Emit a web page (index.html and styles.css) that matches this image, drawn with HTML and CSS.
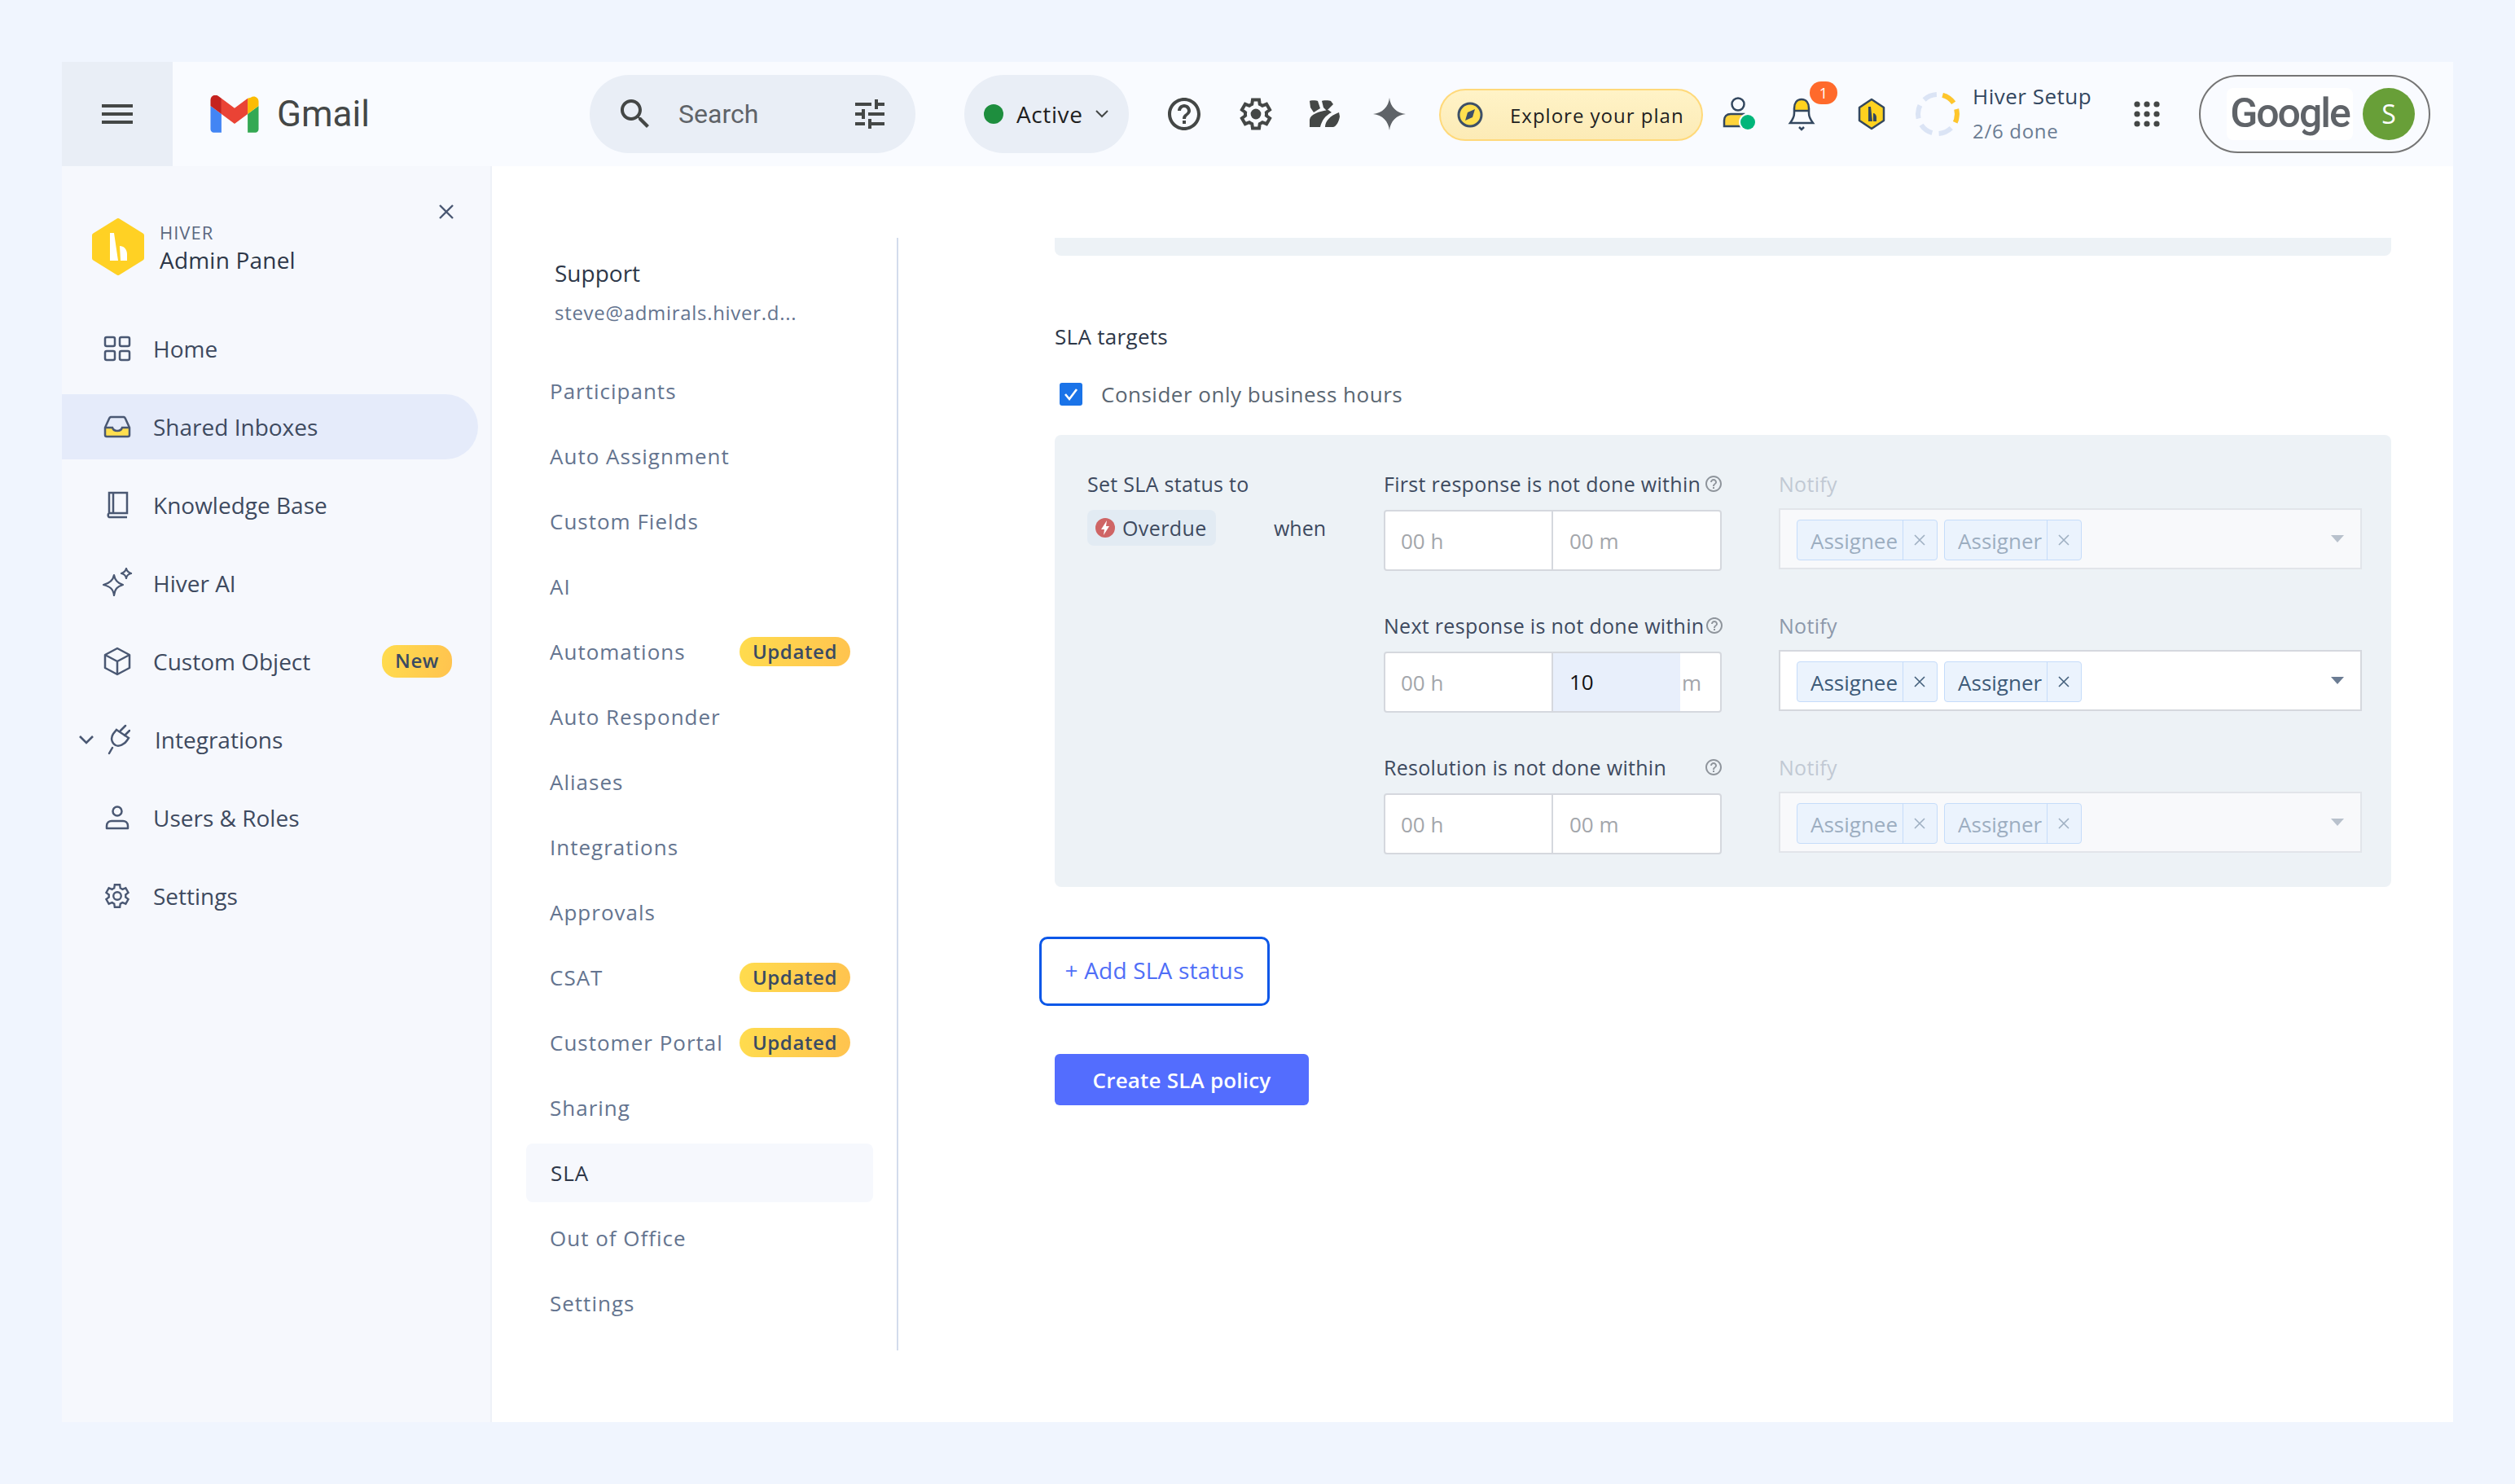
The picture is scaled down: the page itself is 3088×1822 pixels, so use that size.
FILE: index.html
```html
<!DOCTYPE html>
<html lang="en">
<head>
<meta charset="UTF-8" />
<title>Hiver Admin Panel</title>
<link rel="stylesheet" href="styles.css">
</head>
<body>
<div class="app">

  <!-- Gmail top bar -->
  <header class="topbar">
    <div class="burger">
      <svg width="38" height="26" viewBox="0 0 38 26"><path d="M0 1h38v4H0zM0 11h38v4H0zM0 21h38v4H0z" fill="#444746"/></svg>
    </div>
    <div class="brand">
      <svg width="60" height="46" viewBox="0 2.4 24 18.7">
        <path fill="#4285f4" d="M1.636 21.002h3.818V11.73L0 7.64v11.727c0 .904.732 1.636 1.636 1.636z"/>
        <path fill="#34a853" d="M18.545 21.002h3.819c.904 0 1.636-.732 1.636-1.636V7.64l-5.455 4.09z"/>
        <path fill="#fbbc04" d="M18.545 3.92v7.81L24 7.64V5.456c0-2.023-2.309-3.178-3.927-1.964z"/>
        <path fill="#ea4335" d="M5.455 11.73V3.92L12 8.829l6.545-4.909v7.81L12 16.639z"/>
        <path fill="#c5221f" d="M0 5.455v2.186l5.455 4.09V3.92L3.927 2.775C2.309 1.562 0 2.717 0 4.74z"/>
      </svg>
      <span class="brand-name">Gmail</span>
    </div>
    <div class="search">
      <svg width="48" height="48" viewBox="0 0 24 24"><path fill="#444746" d="M15.5 14h-.79l-.28-.27C15.41 12.59 16 11.11 16 9.5 16 5.91 13.09 3 9.5 3S3 5.91 3 9.5 5.91 16 9.5 16c1.61 0 3.09-.59 4.23-1.57l.27.28v.79l5 4.99L20.49 19l-4.99-5zm-6 0C7.01 14 5 11.99 5 9.5S7.01 5 9.5 5 14 7.01 14 9.5 11.99 14 9.5 14z"/></svg>
      <span class="search-text">Search</span>
      <svg width="48" height="48" viewBox="0 0 24 24"><path fill="#444746" d="M3 17v2h6v-2H3zM3 5v2h10V5H3zm10 16v-2h8v-2h-8v-2h-2v6h2zM7 9v2H3v2h4v2h2V9H7zm14 4v-2H11v2h10zm-6-4h2V7h4V5h-4V3h-2v6z"/></svg>
    </div>
    <div class="status-pill">
      <span class="status-dot"></span>
      <span>Active</span>
      <svg width="16" height="10" viewBox="0 0 16 10"><path d="M1 1l7 7 7-7" fill="none" stroke="#444746" stroke-width="2"/></svg>
    </div>
    <div class="tb-icon help-icon">
      <svg width="48" height="48" viewBox="0 0 24 24"><path fill="#444746" d="M11 18h2v-2h-2v2zm1-16C6.48 2 2 6.48 2 12s4.48 10 10 10 10-4.48 10-10S17.52 2 12 2zm0 18c-4.41 0-8-3.59-8-8s3.59-8 8-8 8 3.59 8 8-3.59 8-8 8zm0-14c-2.21 0-4 1.79-4 4h2c0-1.1.9-2 2-2s2 .9 2 2c0 2-3 1.75-3 5h2c0-2.25 3-2.5 3-5 0-2.21-1.79-4-4-4z"/></svg>
    </div>
    <div class="tb-icon gear-icon">
      <svg width="48" height="48" viewBox="0 0 24 24"><path fill="none" stroke="#444746" stroke-width="2" d="M18.43 12.98c.04-.32.07-.64.07-.98s-.03-.66-.07-.98l2.11-1.65-2-3.46-2.49 1c-.52-.4-1.08-.73-1.69-.98L14 3.3h-4l-.38 2.63c-.61.25-1.17.59-1.69.98l-2.49-1-2 3.46 2.11 1.65c-.04.32-.07.65-.07.98s.03.66.07.98l-2.11 1.65 2 3.46 2.49-1c.52.4 1.08.73 1.69.98L10 20.7h4l.38-2.63c.61-.25 1.17-.59 1.69-.98l2.49 1 2-3.46z"/><circle cx="12" cy="12" r="3.2" fill="#444746"/></svg>
    </div>
    <div class="tb-icon paw-icon">
      <svg width="38" height="34" viewBox="0 0 38 34"><path fill="#444746" d="M1 1c0-1 9-1 10 0l3 9-8 5-4-6zM16 1c0-1 10-1 11 0l3 4-8 8-4-4zM1 33V24C2 17 12 14 24 12l4 3C20 19 16 25 14 33zM20 33c0-7 6-14 17-18l1 5c-1 6-4 12-8 13z"/></svg>
    </div>
    <div class="tb-icon spark-icon">
      <svg width="40" height="40" viewBox="0 0 40 40"><path fill="#5f6368" d="M20 0C21 11 29 19 40 20 29 21 21 29 20 40 19 29 11 21 0 20 11 19 19 11 20 0z"/></svg>
    </div>
    <div class="explore">
      <svg width="32" height="32" viewBox="0 0 32 32"><circle cx="16" cy="16" r="14" fill="#ffe04f" stroke="#3d5068" stroke-width="3"/><path d="M22 9l-3 10-9 4 3-10z" fill="#3d5068"/></svg>
      <span>Explore your plan</span>
    </div>
    <div class="tb-icon person-icon">
      <svg width="48" height="44" viewBox="0 0 48 44"><circle cx="23" cy="10" r="7.500" fill="none" stroke="#33475f" stroke-width="2.500"/><path d="M6 37v-7c0-5 3-8 8-8h16l-3 15z" fill="#ffd43b" stroke="#33475f" stroke-width="2.500"/><circle cx="35" cy="32" r="11" fill="#f9fbff"/><circle cx="35" cy="32" r="9" fill="#00b67a"/></svg>
    </div>
    <div class="tb-icon bell-icon">
      <svg width="40" height="42" viewBox="0 0 40 42"><path d="M20 3c-6 0-9 5-9 11v3h18v-3c0-6-3-11-9-11z" fill="#ffd21f"/><path d="M11 17h18v3c0 5 2 8 5 12H6c3-4 5-7 5-12z" fill="#f9fbff"/><path d="M20 3c-6 0-9 5-9 11v6c0 5-2 8-5 12h28c-3-4-5-7-5-12v-6c0-6-3-11-9-11zM11 17h18" fill="none" stroke="#33475f" stroke-width="2.500"/><path d="M17 37l3 3 3-3" fill="none" stroke="#33475f" stroke-width="2.500"/></svg>
      <span class="bell-count">1</span>
    </div>
    <div class="tb-icon hex-icon">
      <svg width="36" height="40" viewBox="0 0 36 40"><path d="M18 2l15 10v16L18 38 3 28V12z" fill="#ffd21f" stroke="#33475f" stroke-width="2.500" stroke-linejoin="round"/><path d="M14 11h3l2 18h-5zM20 19c2 0 4 2 4 5v5h-4z" fill="#33475f"/></svg>
    </div>
    <div class="setup-ring">
      <svg width="56" height="56" viewBox="0 0 56 56"><circle cx="28" cy="28" r="24" fill="none" stroke="#dbe4f5" stroke-width="6" stroke-dasharray="16.750 8.380" transform="rotate(-75 28 28)"/><circle cx="28" cy="28" r="24" fill="none" stroke="#ffc62b" stroke-width="6" stroke-dasharray="16.750 8.380 16.750 108.920" transform="rotate(-75 28 28)"/></svg>
    </div>
    <div class="setup-text">
      <div class="setup-title">Hiver Setup</div>
      <div class="setup-sub">2/6 done</div>
    </div>
    <div class="tb-icon apps-icon">
      <svg width="32" height="32" viewBox="0 0 32 32" fill="#444746"><circle cx="4" cy="4" r="3.600"/><circle cx="16" cy="4" r="3.600"/><circle cx="28" cy="4" r="3.600"/><circle cx="4" cy="16" r="3.600"/><circle cx="16" cy="16" r="3.600"/><circle cx="28" cy="16" r="3.600"/><circle cx="4" cy="28" r="3.600"/><circle cx="16" cy="28" r="3.600"/><circle cx="28" cy="28" r="3.600"/></svg>
    </div>
    <div class="account">
      <div class="google-box">Google</div>
      <div class="avatar">S</div>
    </div>
  </header>

  <div class="body-row">

    <!-- Admin sidebar -->
    <aside class="sidebar">
      <div class="side-head">
        <svg width="64" height="70" viewBox="0 0 64 70"><path d="M32 3l29 18v28L32 67 3 49V21z" fill="#ffd124" stroke="#ffd124" stroke-width="6" stroke-linejoin="round"/><path d="M22 18h5l5 34H22zM34 34c5 0 9 4 9 10v8h-8z" fill="#fff"/></svg>
        <div class="side-title">
          <div class="side-small">HIVER</div>
          <div class="side-big">Admin Panel</div>
        </div>
        <svg class="side-close" width="20" height="20" viewBox="0 0 20 20"><path d="M2 2l16 16M18 2L2 18" stroke="#4a5873" stroke-width="2.400"/></svg>
      </div>
      <nav>
        <a class="side-item">
          <span class="side-icon"><svg width="34" height="32" viewBox="0 0 34 32" fill="none" stroke="#4a5873" stroke-width="2.500"><rect x="2" y="2" width="12" height="11" rx="2"/><rect x="20" y="2" width="12" height="11" rx="2"/><rect x="2" y="19" width="12" height="11" rx="2"/><rect x="20" y="19" width="12" height="11" rx="2"/></svg></span>
          Home
        </a>
        <a class="side-item active">
          <span class="side-icon"><svg width="34" height="28" viewBox="0 0 34 28"><path d="M2 15h9c1 3 3 4 6 4s5-1 6-4h9v9a2 2 0 0 1-2 2H4a2 2 0 0 1-2-2z" fill="#ffdf4f"/><path d="M2 15l5-11a3 3 0 0 1 2-2h16a3 3 0 0 1 2 2l5 11v9a2 2 0 0 1-2 2H4a2 2 0 0 1-2-2zM2 15h9c1 3 3 4 6 4s5-1 6-4h9" fill="none" stroke="#4a5873" stroke-width="2.500"/></svg></span>
          Shared Inboxes
        </a>
        <a class="side-item">
          <span class="side-icon"><svg width="28" height="34" viewBox="0 0 28 34" fill="none" stroke="#4a5873" stroke-width="2.500"><path d="M4 27V2h22v25H4a3 3 0 0 0 0 5h22M9 2v25"/></svg></span>
          Knowledge Base
        </a>
        <a class="side-item">
          <span class="side-icon"><svg width="38" height="38" viewBox="0 0 38 38" fill="none" stroke="#4a5873" stroke-width="2.200" stroke-linejoin="round"><path d="M15 9c1 6 4 10 11 12-7 2-10 5-11 13-1-8-5-11-13-13 8-2 12-6 13-12z"/><path d="M30 1c.5 3 2 4.500 6 6-4 1-5.500 2.500-6 6-.5-3.500-2-5-6-6 4-1.500 5.500-3 6-6z"/></svg></span>
          Hiver AI
        </a>
        <a class="side-item">
          <span class="side-icon"><svg width="34" height="36" viewBox="0 0 34 36" fill="none" stroke="#4a5873" stroke-width="2.500" stroke-linejoin="round"><path d="M17 2l15 8v16l-15 8-15-8V10zM2 10l15 8 15-8M17 18v16"/></svg></span>
          Custom Object
          <span class="badge new-badge">New</span>
        </a>
        <a class="side-item with-arrow">
          <svg class="side-arrow" width="20" height="12" viewBox="0 0 20 12"><path d="M2 2l8 8 8-8" fill="none" stroke="#4a5873" stroke-width="2.600"/></svg>
          <span class="side-icon"><svg width="28" height="38" viewBox="0 0 28 38" fill="none" stroke="#4a5873" stroke-width="2.500" stroke-linecap="round"><path d="M2 36l4-7M16 8l6-6M21 14l6-6M11 7l15 10-2 3c-3 5-10 8-14 6s-7-8-3-14z"/></svg></span>
          Integrations
        </a>
        <a class="side-item">
          <span class="side-icon"><svg width="30" height="30" viewBox="0 0 30 30" fill="none" stroke="#4a5873" stroke-width="2.500"><circle cx="15" cy="7" r="5.500"/><path d="M2 28v-3c0-4 3-6 6-6h14c3 0 6 2 6 6v3z" stroke-linejoin="round"/></svg></span>
          Users &amp; Roles
        </a>
        <a class="side-item">
          <span class="side-icon"><svg width="38" height="38" viewBox="0 0 24 24"><path fill="none" stroke="#4a5873" stroke-width="1.500" d="M18.43 12.98c.04-.32.07-.64.07-.98s-.03-.66-.07-.98l2.11-1.65-2-3.46-2.49 1c-.52-.4-1.08-.73-1.69-.98L14 3.300h-4l-.38 2.630c-.61.25-1.17.59-1.69.98l-2.49-1-2 3.46 2.11 1.650c-.04.32-.07.65-.07.98s.03.66.07.98l-2.110 1.650 2 3.460 2.490-1c.52.4 1.080.73 1.690.98L10 20.700h4l.38-2.630c.61-.25 1.170-.59 1.690-.98l2.490 1 2-3.460z"/><circle cx="12" cy="12" r="3" fill="none" stroke="#4a5873" stroke-width="1.500"/></svg></span>
          Settings
        </a>
      </nav>
    </aside>

    <!-- Inbox settings list -->
    <section class="inbox-nav">
      <div class="inbox-name">Support</div>
      <div class="inbox-mail">steve@admirals.hiver.d...</div>
      <a class="inbox-item">Participants</a>
      <a class="inbox-item">Auto Assignment</a>
      <a class="inbox-item">Custom Fields</a>
      <a class="inbox-item">AI</a>
      <a class="inbox-item">Automations <span class="badge">Updated</span></a>
      <a class="inbox-item">Auto Responder</a>
      <a class="inbox-item">Aliases</a>
      <a class="inbox-item">Integrations</a>
      <a class="inbox-item">Approvals</a>
      <a class="inbox-item">CSAT <span class="badge">Updated</span></a>
      <a class="inbox-item">Customer Portal <span class="badge">Updated</span></a>
      <a class="inbox-item">Sharing</a>
      <a class="inbox-item current">SLA</a>
      <a class="inbox-item">Out of Office</a>
      <a class="inbox-item">Settings</a>
    </section>

    <!-- SLA form -->
    <main class="form">
      <div class="prev-card"></div>
      <div class="form-title">SLA targets</div>
      <label class="check-row">
        <span class="check-box"><svg width="20" height="18" viewBox="0 0 20 18"><path d="M3 9l5 6 9-12" fill="none" stroke="#fff" stroke-width="2.600"/></svg></span>
        Consider only business hours
      </label>

      <div class="sla-panel">
        <div class="status-col">
          <div class="field-label">Set SLA status to</div>
          <div class="status-line">
            <span class="overdue">
              <svg width="24" height="24" viewBox="0 0 24 24"><circle cx="12" cy="12" r="12" fill="#cf6565"/><path d="M14 3L7 14h4l-1 7 7-11h-4z" fill="#fff"/></svg>
              Overdue
            </span>
            <span class="when">when</span>
          </div>
        </div>
        <div class="rules">
          <div class="rule">
            <div>
              <div class="field-label">First response is not done within <svg class="hint" width="24" height="24" viewBox="0 0 24 24"><path fill="#8f959c" d="M11 18h2v-2h-2v2zm1-16C6.480 2 2 6.480 2 12s4.480 10 10 10 10-4.480 10-10S17.520 2 12 2zm0 18c-4.410 0-8-3.590-8-8s3.590-8 8-8 8 3.590 8 8-3.590 8-8 8zm0-14c-2.210 0-4 1.790-4 4h2c0-1.100.9-2 2-2s2 .9 2 2c0 2-3 1.750-3 5h2c0-2.250 3-2.500 3-5 0-2.210-1.790-4-4-4z"/></svg></div>
              <div class="time-input">
                <div class="time-cell">00 h</div>
                <div class="time-cell">00 m</div>
              </div>
            </div>
            <div class="notify off">
              <div class="field-label notify-label">Notify</div>
              <div class="select">
                <span class="tag"><span class="tag-name">Assignee</span><span class="tag-x"><svg width="14" height="14" viewBox="0 0 14 14"><path d="M1 1l12 12M13 1L1 13" stroke="#44607c" stroke-width="1.600"/></svg></span></span>
                <span class="tag"><span class="tag-name">Assigner</span><span class="tag-x"><svg width="14" height="14" viewBox="0 0 14 14"><path d="M1 1l12 12M13 1L1 13" stroke="#44607c" stroke-width="1.600"/></svg></span></span>
                <span class="caret"></span>
              </div>
            </div>
          </div>
          <div class="rule">
            <div>
              <div class="field-label">Next response is not done within<svg class="hint" width="24" height="24" viewBox="0 0 24 24"><path fill="#8f959c" d="M11 18h2v-2h-2v2zm1-16C6.480 2 2 6.480 2 12s4.480 10 10 10 10-4.480 10-10S17.520 2 12 2zm0 18c-4.410 0-8-3.590-8-8s3.590-8 8-8 8 3.590 8 8-3.590 8-8 8zm0-14c-2.210 0-4 1.790-4 4h2c0-1.100.9-2 2-2s2 .9 2 2c0 2-3 1.750-3 5h2c0-2.250 3-2.500 3-5 0-2.210-1.790-4-4-4z"/></svg></div>
              <div class="time-input">
                <div class="time-cell">00 h</div>
                <div class="time-cell filled"><span class="typed">10</span><span class="unit">m</span></div>
              </div>
            </div>
            <div class="notify">
              <div class="field-label notify-label">Notify</div>
              <div class="select">
                <span class="tag"><span class="tag-name">Assignee</span><span class="tag-x"><svg width="14" height="14" viewBox="0 0 14 14"><path d="M1 1l12 12M13 1L1 13" stroke="#44607c" stroke-width="1.600"/></svg></span></span>
                <span class="tag"><span class="tag-name">Assigner</span><span class="tag-x"><svg width="14" height="14" viewBox="0 0 14 14"><path d="M1 1l12 12M13 1L1 13" stroke="#44607c" stroke-width="1.600"/></svg></span></span>
                <span class="caret"></span>
              </div>
            </div>
          </div>
          <div class="rule">
            <div>
              <div class="field-label">Resolution is not done within <svg class="hint" width="24" height="24" viewBox="0 0 24 24"><path fill="#8f959c" d="M11 18h2v-2h-2v2zm1-16C6.480 2 2 6.480 2 12s4.480 10 10 10 10-4.480 10-10S17.520 2 12 2zm0 18c-4.410 0-8-3.590-8-8s3.590-8 8-8 8 3.590 8 8-3.590 8-8 8zm0-14c-2.210 0-4 1.790-4 4h2c0-1.100.9-2 2-2s2 .9 2 2c0 2-3 1.750-3 5h2c0-2.250 3-2.500 3-5 0-2.210-1.790-4-4-4z"/></svg></div>
              <div class="time-input">
                <div class="time-cell">00 h</div>
                <div class="time-cell">00 m</div>
              </div>
            </div>
            <div class="notify off">
              <div class="field-label notify-label">Notify</div>
              <div class="select">
                <span class="tag"><span class="tag-name">Assignee</span><span class="tag-x"><svg width="14" height="14" viewBox="0 0 14 14"><path d="M1 1l12 12M13 1L1 13" stroke="#44607c" stroke-width="1.600"/></svg></span></span>
                <span class="tag"><span class="tag-name">Assigner</span><span class="tag-x"><svg width="14" height="14" viewBox="0 0 14 14"><path d="M1 1l12 12M13 1L1 13" stroke="#44607c" stroke-width="1.600"/></svg></span></span>
                <span class="caret"></span>
              </div>
            </div>
          </div>
        </div>
      </div>

      <button class="add-btn">+ Add SLA status</button>
      <button class="create-btn">Create SLA policy</button>
    </main>
  </div>
</div>
</body>
</html>
```

FILE: styles.css
```css
* {
  box-sizing: border-box;
}
body {
  margin: 0;
  padding: 76px;
  height: 1822px;
  background-color: #f0f5fe;
  font-family: "Open Sans", sans-serif;
  color: #2d3748;
}
.app {
  width: 2936px;
  height: 1670px;
  display: flex;
  flex-direction: column;
  background-color: #fff;
}

/* top bar */
.topbar {
  height: 128px;
  flex-shrink: 0;
  display: flex;
  align-items: center;
  background-color: #f9fbff;
}
.burger {
  width: 136px;
  height: 128px;
  display: flex;
  align-items: center;
  justify-content: center;
  background-color: #e9eef6;
}
.brand {
  width: 512px;
  padding-left: 46px;
  display: flex;
  align-items: center;
  gap: 22px;
}
.brand-name {
  font-family: "Roboto", sans-serif;
  font-size: 44px;
  color: #444746;
}
.search {
  width: 400px;
  height: 96px;
  border-radius: 48px;
  padding: 0 32px;
  display: flex;
  align-items: center;
  background-color: #e9eef6;
}
.search-text {
  flex: 1;
  margin-left: 29px;
  font-family: "Roboto", sans-serif;
  font-size: 32px;
  color: #5f6368;
}
.status-pill {
  width: 202px;
  height: 96px;
  margin-left: 60px;
  border-radius: 48px;
  padding-left: 24px;
  display: flex;
  align-items: center;
  gap: 16px;
  background-color: #e9eef6;
  font-size: 28px;
  font-weight: 500;
  letter-spacing: .6px;
  color: #1f1f1f;
}
.status-dot {
  width: 24px;
  height: 24px;
  border-radius: 50%;
  background-color: #1e8e3e;
}
.tb-icon {
  width: 48px;
  height: 48px;
  flex-shrink: 0;
  display: flex;
  align-items: center;
  justify-content: center;
}
.help-icon { margin-left: 44px; }
.gear-icon { margin-left: 40px; }
.paw-icon { margin-left: 36px; }
.spark-icon { margin-left: 32px; }
.person-icon { margin-left: 20px; }
.bell-icon {
  margin-left: 29px;
  position: relative;
}
.hex-icon { margin-left: 38px; }
.apps-icon { margin-left: 20px; }
.bell-count {
  position: absolute;
  left: 34px;
  top: -16px;
  width: 34px;
  height: 28px;
  border-radius: 14px;
  background-color: #ff6a2b;
  color: #fff;
  font-size: 18px;
  line-height: 28px;
  text-align: center;
}
.explore {
  width: 324px;
  height: 64px;
  margin-left: 37px;
  margin-top: 2px;
  padding-left: 20px;
  border: 2px solid #ffd97a;
  border-radius: 32px;
  display: flex;
  align-items: center;
  gap: 33px;
  background: linear-gradient(180deg, #fff3c7, #fcebb6);
  font-size: 24px;
  font-weight: 500;
  letter-spacing: 1px;
  white-space: nowrap;
  color: #1f1f1f;
}
.setup-ring {
  width: 56px;
  height: 56px;
  margin-left: 29px;
  flex-shrink: 0;
}
.setup-text {
  width: 170px;
  margin-left: 15px;
}
.setup-title {
  font-size: 26px;
  line-height: 36px;
  letter-spacing: .5px;
  color: #33475f;
  margin-top: -2px;
}
.setup-sub {
  margin-top: 8px;
  font-size: 24px;
  line-height: 34px;
  letter-spacing: .7px;
  color: #6b7c93;
}
.account {
  width: 284px;
  height: 96px;
  margin-left: 40px;
  padding-left: 32px;
  border: 2px solid #757575;
  border-radius: 48px;
  display: flex;
  align-items: center;
  gap: 12px;
}
.google-box {
  width: 155px;
  height: 64px;
  border-radius: 8px;
  background-color: #fff;
  font-family: "Roboto", sans-serif;
  font-size: 50px;
  font-weight: 500;
  line-height: 62px;
  letter-spacing: -2px;
  text-align: center;
  color: #5f6368;
}
.avatar {
  width: 64px;
  height: 64px;
  border-radius: 50%;
  background-color: #689f38;
  color: #fff;
  font-size: 32px;
  line-height: 64px;
  text-align: center;
}

.body-row {
  flex: 1;
  display: flex;
}

/* admin sidebar */
.sidebar {
  width: 528px;
  flex-shrink: 0;
  border-right: 2px solid #eef1f8;
  background-color: #f6f8fd;
}
.side-head {
  height: 134px;
  padding: 64px 0 0 37px;
  margin-bottom: 50px;
  display: flex;
  align-items: flex-start;
}
.side-title {
  margin-left: 19px;
}
.side-small {
  margin-top: 2px;
  font-size: 22px;
  line-height: 30px;
  letter-spacing: 1px;
  color: #5b6880;
}
.side-big {
  font-size: 28px;
  line-height: 38px;
  font-weight: 500;
  letter-spacing: .2px;
  color: #2d3748;
}
.side-close {
  margin: -18px 0 0 175px;
}
.side-item {
  width: 511px;
  height: 80px;
  margin-bottom: 16px;
  padding: 0 32px 0 44px;
  display: flex;
  align-items: center;
  gap: 20px;
  border-radius: 0 40px 40px 0;
  font-size: 28px;
  color: #3e4a5f;
}
.side-item.active {
  background-color: #e5ebfa;
  font-weight: 500;
}
.side-icon {
  width: 48px;
  height: 48px;
  flex-shrink: 0;
  display: flex;
  align-items: center;
  justify-content: center;
}
.with-arrow {
  padding-left: 20px;
  gap: 6px;
}
.with-arrow .side-icon {
  margin-right: 14px;
}
.badge {
  height: 36px;
  padding: 0 16px;
  border-radius: 18px;
  background: linear-gradient(100deg, #ffdc4e, #ffc34f);
  font-size: 24px;
  font-weight: 600;
  line-height: 36px;
  letter-spacing: .6px;
  color: #3a4a63;
}
.new-badge {
  height: 40px;
  line-height: 38px;
  margin-left: auto;
}

/* inbox settings list */
.inbox-nav {
  width: 499px;
  height: 1366px;
  margin-top: 88px;
  flex-shrink: 0;
  padding: 23px 29px 0 42px;
  border-right: 2px solid #d3dcec;
}
.inbox-name {
  padding-left: 35px;
  font-size: 28px;
  font-weight: 500;
  line-height: 40px;
  color: #2d3748;
}
.inbox-mail {
  margin: 12px 0 43px;
  padding-left: 35px;
  font-size: 24px;
  line-height: 34px;
  letter-spacing: .7px;
  color: #64748f;
}
.inbox-item {
  height: 72px;
  margin-bottom: 8px;
  padding: 0 28px 0 29px;
  display: flex;
  align-items: center;
  justify-content: space-between;
  border-radius: 8px;
  font-size: 26px;
  letter-spacing: 1px;
  color: #64748f;
}
.inbox-item.current {
  padding-left: 30px;
  background-color: #f6f8fd;
  color: #2d3748;
}

/* sla form */
.form {
  width: 1641px;
  margin: 88px 0 0 192px;
  display: flex;
  flex-direction: column;
  align-items: flex-start;
}
.prev-card {
  width: 100%;
  height: 22px;
  border-radius: 0 0 8px 8px;
  background-color: #edf2f6;
}
.form-title {
  margin-top: 81px;
  font-size: 26px;
  font-weight: 500;
  line-height: 36px;
  letter-spacing: .3px;
  color: #2d3748;
}
.check-row {
  height: 36px;
  margin: 35px 0 32px 6px;
  display: flex;
  align-items: center;
  gap: 23px;
  font-size: 26px;
  letter-spacing: .5px;
  color: #5a6672;
}
.check-box {
  width: 28px;
  height: 28px;
  border-radius: 3px;
  display: flex;
  align-items: center;
  justify-content: center;
  background-color: #1a73e8;
}
.sla-panel {
  width: 100%;
  padding: 43px 36px 40px 40px;
  display: flex;
  border-radius: 8px;
  background-color: #edf2f6;
}
.status-col {
  width: 364px;
  flex-shrink: 0;
}
.field-label {
  height: 36px;
  margin-bottom: 13px;
  padding-bottom: 3px;
  display: flex;
  align-items: center;
  justify-content: space-between;
  font-size: 25px;
  letter-spacing: .3px;
  white-space: nowrap;
  color: #3e4a5f;
}
.status-line {
  display: flex;
  align-items: center;
}
.overdue {
  width: 158px;
  height: 44px;
  padding-left: 10px;
  display: flex;
  align-items: center;
  gap: 9px;
  border-radius: 8px;
  background-color: #e2ebf3;
  font-size: 25px;
  font-weight: 500;
  letter-spacing: .4px;
  color: #3e4a5f;
}
.when {
  margin-left: 71px;
  font-size: 25px;
  color: #3e4a5f;
}
.rules {
  display: flex;
  flex-direction: column;
  gap: 50px;
}
.rule {
  display: grid;
  grid-template-columns: 415px 716px;
  column-gap: 70px;
}
.hint {
  margin-right: -2px;
  flex-shrink: 0;
}
.time-input {
  height: 75px;
  display: flex;
  border: 2px solid #d5d8de;
  border-radius: 4px;
  background-color: #fff;
}
.time-cell {
  width: 204px;
  flex-shrink: 0;
  padding-left: 19px;
  display: flex;
  align-items: center;
  font-size: 26px;
  color: #a3a6ab;
}
.time-cell + .time-cell {
  flex: 1;
  width: auto;
  padding-left: 20px;
  border-left: 2px solid #d5d8de;
}
.time-cell.filled {
  padding-left: 0;
}
.typed {
  width: 156px;
  height: 100%;
  padding-left: 20px;
  background-color: #e8effb;
  line-height: 71px;
  color: #111;
}
.unit {
  margin-left: 2px;
}
.notify-label {
  color: #8d99ab;
}
.select {
  height: 75px;
  margin-top: -2px;
  padding: 12px 22px 0 20px;
  position: relative;
  display: flex;
  align-items: flex-start;
  gap: 8px;
  border: 2px solid #d5d8de;
  background-color: #fff;
}
.tag {
  height: 50px;
  display: flex;
  border: 1px solid #c5dcfa;
  border-radius: 4px;
  background-color: #ebf3fd;
  font-size: 26px;
  line-height: 50px;
  color: #3d5a78;
}
.tag-name {
  padding: 0 6px 0 16px;
}
.tag-x {
  width: 42px;
  padding-right: 2px;
  display: flex;
  align-items: center;
  justify-content: center;
  border-left: 1px solid #c5dcfa;
}
.caret {
  position: absolute;
  right: 20px;
  top: 31px;
  border-left: 8px solid transparent;
  border-right: 8px solid transparent;
  border-top: 9px solid #6b7c93;
}
.notify.off .field-label {
  opacity: .45;
}
.notify.off .select {
  background-color: #f8f9fb;
  border-color: #e2e5ea;
}
.notify.off .tag-name,
.notify.off .tag-x svg,
.notify.off .caret {
  opacity: .45;
}
.add-btn {
  width: 283px;
  height: 85px;
  margin: 61px 0 0 -19px;
  padding-bottom: 4px;
  border: 3px solid #0b57e8;
  border-radius: 10px;
  background-color: #fff;
  font-family: "Open Sans", sans-serif;
  font-size: 28px;
  font-weight: 500;
  letter-spacing: .2px;
  color: #4f6ef7;
}
.create-btn {
  width: 312px;
  height: 63px;
  margin-top: 59px;
  border: none;
  border-radius: 6px;
  background-color: #536dfe;
  font-family: "Open Sans", sans-serif;
  font-size: 26px;
  font-weight: 600;
  letter-spacing: .2px;
  color: #fff;
}
```
